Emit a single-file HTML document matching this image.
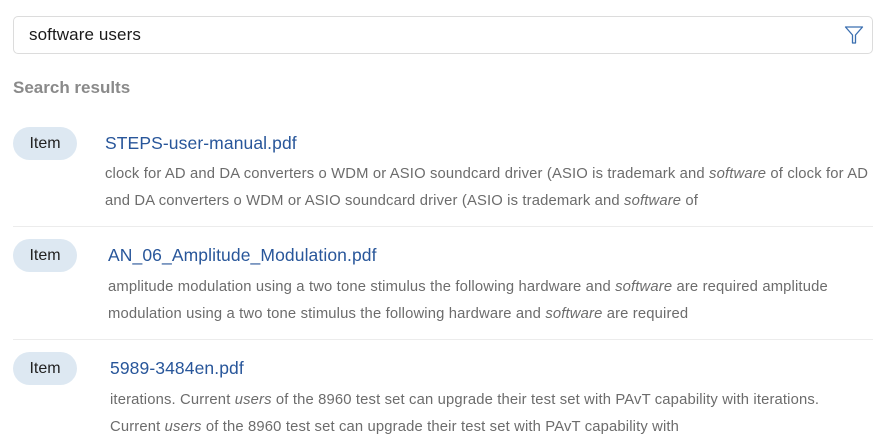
<!DOCTYPE html>
<html><head><style>
body{margin:0;width:879px;height:444px;background:#fff;font-family:"Liberation Sans",sans-serif;position:relative;overflow:hidden}
.inp{position:absolute;left:13px;top:16px;width:860px;height:38px;border:1px solid #dcdcdc;border-radius:5px;box-sizing:border-box}
.inp span{position:absolute;left:15px;top:8px;font-size:17px;color:#1a1a1a;letter-spacing:0.1px}
.inp svg{position:absolute;right:8px;top:8px}
.h{position:absolute;left:13px;top:78px;font-size:17px;color:#8a8a8a;font-weight:bold;letter-spacing:0px}
.pill{position:absolute;left:13px;width:64px;height:33px;border-radius:17px;background:#dde8f2;color:#222;font-size:16px;text-align:center;line-height:33px}
.t{position:absolute;font-size:17.5px;color:#28569a;letter-spacing:0.1px}
.d{position:absolute;left:105px;font-size:14.8px;color:#6c6c6c;line-height:27px;width:775px;letter-spacing:0.15px;white-space:nowrap}
.sep{position:absolute;left:13px;right:6px;height:1px;background:#ececec}
</style></head><body>
<div class="inp"><span>software users</span>
<svg width="20" height="20" viewBox="0 0 20 20"><path d="M1.5 2 H18.5 L11.5 10 V18 H8.5 V10 Z" fill="none" stroke="#3b6fb0" stroke-width="1.3" stroke-linejoin="round"/></svg></div>
<div class="h">Search results</div>

<div class="pill" style="top:127px">Item</div>
<div class="t" style="left:105px;top:133px">STEPS-user-manual.pdf</div>
<div class="d" style="top:161px">clock for AD and DA converters o WDM or ASIO soundcard driver (ASIO is trademark and <i>software</i> of clock for AD<br>and DA converters o WDM or ASIO soundcard driver (ASIO is trademark and <i>software</i> of</div>
<div class="sep" style="top:226px"></div>

<div class="pill" style="top:239px">Item</div>
<div class="t" style="left:108px;top:245px">AN_06_Amplitude_Modulation.pdf</div>
<div class="d" style="left:108px;top:274px">amplitude modulation using a two tone stimulus the following hardware and <i>software</i> are required amplitude<br>modulation using a two tone stimulus the following hardware and <i>software</i> are required</div>
<div class="sep" style="top:339px"></div>

<div class="pill" style="top:352px">Item</div>
<div class="t" style="left:110px;top:358px">5989-3484en.pdf</div>
<div class="d" style="left:110px;top:387px">iterations. Current <i>users</i> of the 8960 test set can upgrade their test set with PAvT capability with iterations.<br>Current <i>users</i> of the 8960 test set can upgrade their test set with PAvT capability with</div>
</body></html>
